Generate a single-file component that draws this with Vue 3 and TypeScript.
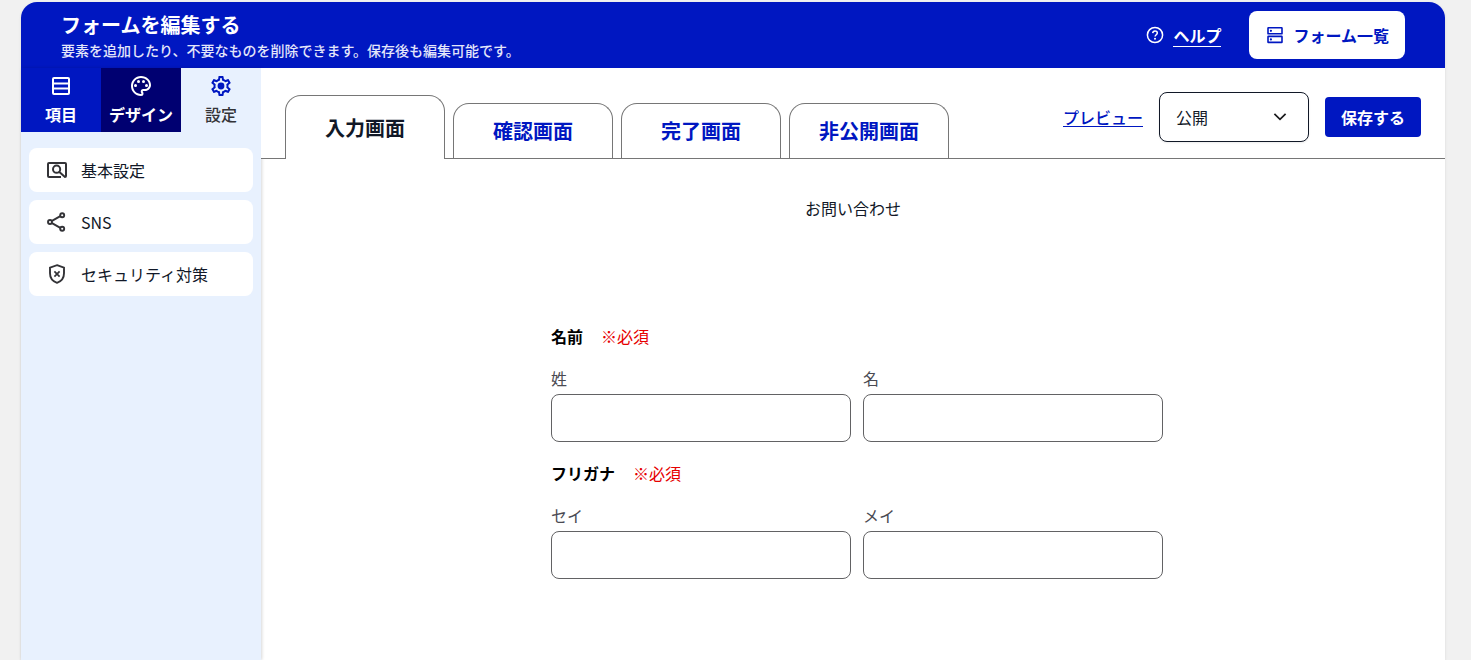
<script setup lang="ts">
import { ref } from 'vue'

interface Field { id: string; label: string }
interface Group { title: string; fields: Field[] }

const screens: string[] = ['入力画面', '確認画面', '完了画面', '非公開画面']
const activeScreen = ref<number>(0)
const status = ref<string>('公開')

const groups: Group[] = [
  { title: '名前', fields: [{ id: 'sei', label: '姓' }, { id: 'mei', label: '名' }] },
  { title: 'フリガナ', fields: [{ id: 'sei-kana', label: 'セイ' }, { id: 'mei-kana', label: 'メイ' }] },
]
</script>

<template>
  <div class="page">
    <div class="panel">
      <header class="header">
        <div class="heading">
          <h1>フォームを編集する</h1>
          <p>要素を追加したり、不要なものを削除できます。保存後も編集可能です。</p>
        </div>
        <a class="help" href="#">
          <svg width="20" height="20" viewBox="0 0 20 20" fill="none" stroke="currentColor" aria-hidden="true">
            <circle cx="10" cy="10" r="7.6" stroke-width="1.5" />
            <path d="M7.7 8.1c.1-1.4 1-2.2 2.3-2.2s2.3.8 2.3 2c0 1.7-2.2 1.9-2.2 3.7" stroke-width="1.5" />
            <circle cx="10" cy="13.7" r="1" fill="currentColor" stroke="none" />
          </svg>
          <span>ヘルプ</span>
        </a>
        <button class="list-button" type="button">
          <svg width="20" height="20" viewBox="0 0 20 20" fill="none" stroke="currentColor" stroke-width="1.6" aria-hidden="true">
            <rect x="3" y="2.8" width="14" height="6" rx=".4" />
            <rect x="3" y="11.4" width="14" height="6" rx=".4" />
            <circle cx="5.9" cy="5.8" r="1.1" fill="currentColor" stroke="none" />
            <circle cx="5.9" cy="14.4" r="1.1" fill="currentColor" stroke="none" />
          </svg>
          <span>フォーム一覧</span>
        </button>
      </header>

      <div class="body">
        <aside class="sidebar">
          <div class="modes">
            <button class="mode" type="button">
              <svg width="24" height="24" viewBox="0 0 24 24" fill="none" stroke="currentColor" stroke-width="2" aria-hidden="true">
                <rect x="4" y="4" width="16" height="16" rx="1" />
                <path d="M4 9.5h16M4 14.5h16" />
              </svg>
              <span>項目</span>
            </button>
            <button class="mode design" type="button">
              <svg width="24" height="24" viewBox="0 0 24 24" fill="currentColor" aria-hidden="true">
                <path d="M12 22C6.49 22 2 17.51 2 12S6.49 2 12 2s10 4.04 10 9c0 3.31-2.69 6-6 6h-1.77c-.28 0-.5.22-.5.5 0 .12.05.23.13.33.41.47.64 1.06.64 1.67A2.5 2.5 0 0 1 12 22zm0-18c-4.41 0-8 3.59-8 8s3.59 8 8 8c.28 0 .5-.22.5-.5a.54.54 0 0 0-.14-.35c-.41-.46-.63-1.05-.63-1.65a2.5 2.5 0 0 1 2.5-2.5H16c2.21 0 4-1.79 4-4 0-3.86-3.59-7-8-7z" />
                <circle cx="6.5" cy="11.5" r="1.5" />
                <circle cx="9.5" cy="7.5" r="1.5" />
                <circle cx="14.5" cy="7.5" r="1.5" />
                <circle cx="17.5" cy="11.5" r="1.5" />
              </svg>
              <span>デザイン</span>
            </button>
            <button class="mode current" type="button">
              <svg width="24" height="24" viewBox="0 0 24 24" fill="currentColor" aria-hidden="true">
                <path d="M19.43 12.98c.04-.32.07-.64.07-.98 0-.34-.03-.66-.07-.98l2.11-1.65c.19-.15.24-.42.12-.64l-2-3.46a.5.5 0 0 0-.61-.22l-2.49 1c-.52-.4-1.08-.73-1.69-.98l-.38-2.65A.488.488 0 0 0 14 2h-4c-.25 0-.46.18-.49.42l-.38 2.65c-.61.25-1.17.59-1.69.98l-2.49-1a.5.5 0 0 0-.61.22l-2 3.46c-.13.22-.07.49.12.64l2.11 1.65c-.04.32-.07.65-.07.98s.03.66.07.98l-2.11 1.65c-.19.15-.24.42-.12.64l2 3.46c.12.22.39.3.61.22l2.49-1c.52.4 1.08.73 1.69.98l.38 2.65c.03.24.24.42.49.42h4c.25 0 .46-.18.49-.42l.38-2.65c.61-.25 1.17-.59 1.69-.98l2.49 1c.23.09.49 0 .61-.22l2-3.46c.12-.22.07-.49-.12-.64l-2.11-1.65zm-1.98-1.71c.04.31.05.52.05.73 0 .21-.02.43-.05.73l-.14 1.13.89.7 1.08.84-.7 1.21-1.27-.51-1.04-.42-.9.68c-.43.32-.84.56-1.25.73l-1.06.43-.16 1.13-.2 1.35h-1.4l-.19-1.35-.16-1.13-1.06-.43c-.43-.18-.83-.41-1.23-.71l-.91-.7-1.06.43-1.27.51-.7-1.21 1.08-.84.89-.7-.14-1.13c-.03-.31-.05-.54-.05-.74s.02-.43.05-.73l.14-1.13-.89-.7-1.08-.84.7-1.21 1.27.51 1.04.42.9-.68c.43-.32.84-.56 1.25-.73l1.06-.43.16-1.13.2-1.35h1.39l.19 1.35.16 1.13 1.06.43c.43.18.83.41 1.23.71l.91.7 1.06-.43 1.27-.51.7 1.21-1.07.85-.89.7.14 1.13z" fill-rule="evenodd" />
                <circle cx="12" cy="12" r="3.4" />
              </svg>
              <span>設定</span>
            </button>
          </div>
          <nav class="menu">
            <a class="menu-item" href="#">
              <svg width="24" height="24" viewBox="0 0 24 24" fill="none" stroke="currentColor" stroke-width="2" aria-hidden="true">
                <path d="M16 19H4a1 1 0 0 1-1-1V6a1 1 0 0 1 1-1h16a1 1 0 0 1 1 1v12q0 1-1 1l-6.2-5.6" />
                <circle cx="11.6" cy="11.2" r="3.6" />
              </svg>
              <span>基本設定</span>
            </a>
            <a class="menu-item" href="#">
              <svg width="24" height="24" viewBox="0 0 24 24" fill="none" stroke="currentColor" stroke-width="1.9" aria-hidden="true">
                <path d="M7 10.9l8.3-4.7M7 13.1l8.3 4.7" />
                <circle cx="5" cy="12" r="2" />
                <circle cx="17.2" cy="5.2" r="2" />
                <circle cx="17.2" cy="18.8" r="2" />
              </svg>
              <span>SNS</span>
            </a>
            <a class="menu-item" href="#">
              <svg width="24" height="24" viewBox="0 0 24 24" fill="none" stroke="currentColor" aria-hidden="true">
                <path d="M12 3.2l7 2.5v5.6c0 4.5-2.8 8.1-7 9.5-4.2-1.4-7-5-7-9.5V5.7z" stroke-width="1.9" />
                <path d="M9.4 9.4l5.2 5.2M14.6 9.4l-5.2 5.2" stroke-width="1.7" />
              </svg>
              <span>セキュリティ対策</span>
            </a>
          </nav>
        </aside>

        <main class="main">
          <div class="toolbar">
            <div class="tabs" role="tablist">
              <button
                v-for="(screen, i) in screens"
                :key="screen"
                class="tab"
                :class="{ active: i === activeScreen }"
                type="button"
                role="tab"
                :aria-selected="i === activeScreen"
                @click="activeScreen = i"
              >{{ screen }}</button>
            </div>
            <div class="actions">
              <a class="preview" href="#">プレビュー</a>
              <div class="select-box">
                <select v-model="status" aria-label="公開状態">
                  <option>公開</option>
                  <option>非公開</option>
                </select>
                <svg class="chevron" width="16" height="16" viewBox="0 0 16 16" fill="none" stroke="currentColor" stroke-width="1.7" aria-hidden="true">
                  <path d="M2.4 4.8L8 10.4l5.6-5.6" />
                </svg>
              </div>
              <button class="save" type="button">保存する</button>
            </div>
          </div>

          <div class="canvas">
            <h2>お問い合わせ</h2>
            <form class="form">
              <fieldset v-for="group in groups" :key="group.title">
                <legend><b>{{ group.title }}</b><span>※必須</span></legend>
                <div class="fields">
                  <div v-for="field in group.fields" :key="field.id" class="field">
                    <label :for="field.id">{{ field.label }}</label>
                    <input :id="field.id" type="text" />
                  </div>
                </div>
              </fieldset>
            </form>
          </div>
        </main>
      </div>
    </div>
  </div>
</template>

<style>
body {
  background: #f1f1f1;
}
</style>

<style scoped>
.page, .page * {
  box-sizing: border-box;
}
.page {
  min-height: 100vh;
  padding: 2px 26px 0 21px;
  display: flex;
  font-family: "Noto Sans CJK JP", "Noto Sans", sans-serif;
  font-size: 16px;
  line-height: 24px;
  color: #1a1a1c;
}
button, select, input {
  font: inherit;
  color: inherit;
  margin: 0;
}
button {
  border: 0;
  padding: 0;
  cursor: pointer;
}
svg {
  display: block;
  flex: none;
}
.panel {
  flex: 1;
  display: flex;
  flex-direction: column;
  background: #fff;
  border-radius: 16px 16px 0 0;
  box-shadow: 0 1px 3px rgba(0, 0, 0, 0.1);
}
.header {
  display: flex;
  align-items: center;
  height: 66px;
  padding: 0 40px;
  background: #0017c1;
  border-radius: 16px 16px 0 0;
  color: #fff;
}
.heading {
  flex: 1;
  padding-top: 2px;
}
h1 {
  margin: 0;
  font-size: 20px;
  line-height: 28px;
  font-weight: 700;
}
.heading p {
  margin: 0;
  font-size: 14px;
  line-height: 22px;
  font-weight: 500;
  color: #e4e6fa;
}
.help {
  display: flex;
  align-items: center;
  gap: 8px;
  margin-right: 28px;
  color: #fff;
  font-weight: 700;
  text-decoration: none;
}
.help span {
  line-height: 22px;
  border-bottom: 1px solid #fff;
}
.list-button {
  display: flex;
  align-items: center;
  gap: 8px;
  height: 48px;
  padding: 0 16px;
  border-radius: 8px;
  background: #fff;
  color: #0017c1;
  font-weight: 700;
}
.body {
  flex: 1;
  display: flex;
}
.sidebar {
  width: 240px;
  flex: none;
  background: #e8f1fe;
  box-shadow: 1px 0 3px rgba(0, 0, 0, 0.16);
}
.modes {
  display: grid;
  grid-template-columns: repeat(3, 1fr);
}
.mode {
  display: flex;
  flex-direction: column;
  align-items: center;
  gap: 4px;
  height: 64px;
  padding-top: 6px;
  background: #0017c1;
  color: #fff;
  font-weight: 700;
}
.mode.design {
  background: #000071;
}
.mode.current {
  background: #e8f1fe;
  color: #0017c1;
  font-weight: 500;
}
.mode.current span {
  color: #333337;
}
.menu {
  display: grid;
  gap: 8px;
  padding: 16px 8px;
}
.menu-item {
  display: flex;
  align-items: center;
  gap: 12px;
  height: 44px;
  padding: 0 16px;
  border-radius: 8px;
  background: #fff;
  color: #333337;
  text-decoration: none;
}
.menu-item span {
  color: #111827;
}
.main {
  flex: 1;
  min-width: 0;
}
.toolbar {
  display: flex;
  align-items: flex-end;
  justify-content: space-between;
  position: relative;
  height: 91px;
  padding: 0 24px;
  background: #fff;
  border-bottom: 1px solid #767676;
}
.tabs {
  display: flex;
  align-items: flex-end;
  gap: 8px;
}
.tab {
  width: 160px;
  height: 55px;
  border: 1px solid #767676;
  border-bottom: 0;
  border-radius: 16px 16px 0 0;
  background: #fff;
  color: #0017c1;
  font-size: 20px;
  font-weight: 700;
}
.tab.active {
  height: 64px;
  margin-bottom: -1px;
  color: #111827;
}
.actions {
  display: flex;
  align-items: center;
  gap: 16px;
  margin-bottom: 16px;
}
.preview {
  line-height: 18px;
  border-bottom: 1px solid #0017c1;
  color: #0017c1;
  font-weight: 500;
  text-decoration: none;
}
.select-box {
  position: relative;
  width: 150px;
}
select {
  display: block;
  width: 100%;
  height: 50px;
  padding: 0 16px;
  appearance: none;
  border: 1px solid #111827;
  border-radius: 8px;
  background: #fff;
  color: #111827;
  box-shadow: 0 1px 2px rgba(0, 0, 0, 0.08);
}
.chevron {
  position: absolute;
  top: 17px;
  right: 21px;
  pointer-events: none;
}
.save {
  height: 40px;
  padding: 0 16px;
  border-radius: 4px;
  background: #0017c1;
  color: #fff;
  font-weight: 700;
}
.canvas {
  padding: 37px 24px;
}
h2 {
  margin: 0;
  font-size: 16px;
  font-weight: 400;
  text-align: center;
  color: #111827;
}
.form {
  max-width: 620px;
  margin: 104px auto 0;
  padding-left: 8px;
}
fieldset {
  margin: 0 0 19px;
  padding: 0;
  border: 0;
  min-width: 0;
}
legend {
  display: flex;
  gap: 18px;
  padding: 0;
  margin-bottom: 18px;
  color: #000;
}
legend span {
  color: #e60000;
}
.fields {
  display: grid;
  grid-template-columns: 1fr 1fr;
  gap: 12px;
}
label {
  display: block;
  margin-bottom: 4px;
  color: #4a4a52;
}
input {
  display: block;
  width: 100%;
  height: 48px;
  padding: 0 16px;
  border: 1px solid #626264;
  border-radius: 8px;
  background: #fff;
}
</style>
